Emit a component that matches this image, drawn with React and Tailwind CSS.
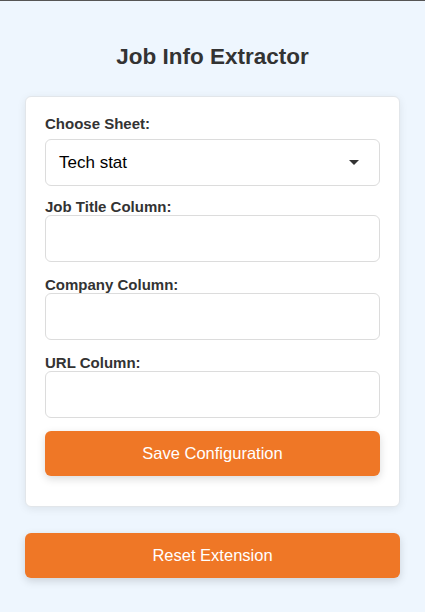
import React from 'react';

const Field = ({ label }) => (
    <div>
        <label className="block text-[15px] leading-[16px] font-bold text-[#333]">{label}</label>
        <input
            type="text"
            className="block w-full h-[47px] rounded-[6px] border border-[#dcdcdc] bg-white px-3 outline-none"
        />
    </div>
);

const App = () => {
    return (
        <div
            className="min-h-[612px] bg-[#eef6fe] border-t border-[#555] flex flex-col items-center"
            style={{ fontFamily: '"Liberation Sans", Arial, sans-serif' }}
        >
            <h1 className="mt-[42px] text-[22.5px] leading-[28px] font-bold text-[#333]">Job Info Extractor</h1>

            {/* Config card */}
            <div className="mt-[25px] w-[375px] bg-white rounded-[6px] border border-[#e2e6ea] shadow-[0_2px_8px_rgba(0,0,0,0.08)] px-[19px] pt-[19px] pb-[30px]">
                <label className="block text-[15px] leading-[16px] font-bold text-[#333]">Choose Sheet:</label>
                <div className="relative mt-[7px] h-[47px] rounded-[6px] border border-[#dcdcdc] flex items-center pl-[13px]">
                    <span className="text-[17px] text-black">Tech stat</span>
                    <svg className="absolute right-[20px] top-[20px]" width="10" height="5" viewBox="0 0 10 5">
                        <path d="M0 0 L10 0 L5 5 Z" fill="#333" />
                    </svg>
                </div>

                <div className="mt-[13px]">
                    <Field label="Job Title Column:" />
                </div>
                <div className="mt-[15px]">
                    <Field label="Company Column:" />
                </div>
                <div className="mt-[15px]">
                    <Field label="URL Column:" />
                </div>

                <button className="mt-[13px] w-full h-[45px] rounded-[6px] bg-[#ef7726] text-white text-[16.5px] shadow-[0_3px_8px_rgba(0,0,0,0.15)]">
                    Save Configuration
                </button>
            </div>

            <button className="mt-[26px] w-[375px] h-[45px] rounded-[6px] bg-[#ef7726] text-white text-[16.5px] shadow-[0_3px_8px_rgba(0,0,0,0.15)]">
                Reset Extension
            </button>
        </div>
    );
};

export default App;
